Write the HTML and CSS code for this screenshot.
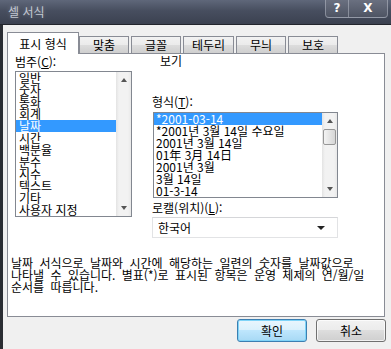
FILE: index.html
```html
<!DOCTYPE html>
<html lang="ko">
<head>
    <meta charset="UTF-8">
    <title>셀 서식</title>
    <link rel="stylesheet" href="styles.css">
</head>
<body>
    <div class="window">
        <div class="titlebar">
            <span class="title">셀 서식</span>
            <div class="caption">
                <span class="cap-btn help">?</span>
                <span class="cap-btn close">X</span>
            </div>
        </div>

        <div class="tabs">
            <span class="tab active">표시 형식</span>
            <span class="tab">맞춤</span>
            <span class="tab">글꼴</span>
            <span class="tab">테두리</span>
            <span class="tab">무늬</span>
            <span class="tab">보호</span>
        </div>

        <div class="panel">
            <div class="cols">
                <div class="col-left">
                    <div class="label">범주(<u>C</u>):</div>
                    <div class="listbox cat">
                        <ul class="items">
                            <li>일반</li>
                            <li>숫자</li>
                            <li>통화</li>
                            <li>회계</li>
                            <li class="selected">날짜</li>
                            <li>시간</li>
                            <li>백분율</li>
                            <li>분수</li>
                            <li>지수</li>
                            <li>텍스트</li>
                            <li>기타</li>
                            <li>사용자 지정</li>
                        </ul>
                        <div class="scrollbar">
                            <span class="arrow up"></span>
                            <span class="arrow down"></span>
                        </div>
                    </div>
                </div>

                <div class="col-right">
                    <div class="sample">보기</div>
                    <div class="label fmt-label">형식(<u>T</u>):</div>
                    <div class="listbox fmt">
                        <ul class="items">
                            <li class="selected">*2001-03-14</li>
                            <li>*2001년 3월 14일 수요일</li>
                            <li>2001년 3월 14일</li>
                            <li>01年 3月 14日</li>
                            <li>2001년 3월</li>
                            <li>3월 14일</li>
                            <li>01-3-14</li>
                        </ul>
                        <div class="scrollbar">
                            <span class="arrow up"></span>
                            <span class="thumb"></span>
                            <span class="arrow down"></span>
                        </div>
                    </div>
                    <div class="label locale-label">로캘(위치)(<u>L</u>):</div>
                    <div class="combo">
                        <span>한국어</span>
                        <span class="combo-arrow"></span>
                    </div>
                </div>
            </div>

            <p class="desc">날짜 서식으로 날짜와 시간에 해당하는 일련의 숫자를 날짜값으로<br>나타낼 수 있습니다. 별표(*)로 표시된 항목은 운영 체제의 연/월/일<br>순서를 따릅니다.</p>
        </div>

        <div class="buttons">
            <button class="btn default">확인</button>
            <button class="btn">취소</button>
        </div>
    </div>
</body>
</html>
```

FILE: styles.css
```css
* {
    box-sizing: border-box;
}

html, body {
    margin: 0;
    padding: 0;
}

body {
    width: 391px;
    height: 349px;
    overflow: hidden;
    background-color: #f0f0f0;
    font-family: "Noto Sans CJK KR", "Noto Sans", sans-serif;
    font-size: 12px;
    color: #000;
}

.window {
    height: 349px;
    border-left: 3px solid #2a2d33;
    background-color: #f0f0f0;
}

/* title bar */
.titlebar {
    display: flex;
    height: 25px;
    margin-left: -3px;
    background: linear-gradient(#5f677a, #474e5f 45%, #3b4150);
    border-bottom: 1px solid #22252c;
}

.title {
    padding: 5px 0 0 8px;
    line-height: 14px;
    color: #c3c8d2;
    text-shadow: 0 0 4px rgba(255, 255, 255, 0.25);
}

.caption {
    display: flex;
    margin-left: auto;
    margin-right: 3px;
    height: 18px;
    border: 1px solid rgba(200, 205, 215, 0.45);
    border-top: none;
    border-radius: 0 0 4px 4px;
    background: linear-gradient(#6a7080, #4e5463);
}

.cap-btn {
    height: 17px;
    line-height: 16px;
    text-align: center;
    color: #fff;
    font-family: "DejaVu Sans", sans-serif;
    font-weight: bold;
    font-size: 12px;
}

.help {
    width: 23px;
    border-right: 1px solid rgba(200, 205, 215, 0.45);
}

.close {
    width: 38px;
}

/* tabs */
.tabs {
    display: flex;
    align-items: flex-end;
    height: 28px;
    padding-left: 4px;
}

.tab {
    min-width: 50px;
    height: 17px;
    padding: 0 8px;
    margin-left: 2px;
    line-height: 16px;
    text-align: center;
    border: 1px solid #898c95;
    border-bottom: none;
    background: linear-gradient(#f2f2f2, #ebebeb 50%, #dddddd 50%, #cfcfcf);
}

.tab.active {
    width: 72px;
    height: 22px;
    margin-left: 0;
    margin-bottom: -1px;
    padding-top: 3px;
    background: #fff;
    position: relative;
}

.tab.active + .tab {
    margin-left: 0;
}

/* panel */
.panel {
    height: 264px;
    margin: 0 6px 0 4px;
    border: 1px solid #898c95;
    background-color: #fff;
}

.cols {
    display: grid;
    grid-template-columns: 117px 186px;
    column-gap: 20px;
    padding: 2px 0 0 7px;
}

.label {
    line-height: 12px;
    height: 12px;
}

.listbox {
    display: flex;
    border: 1px solid #828790;
    background-color: #fff;
}

.listbox.cat {
    margin-top: 3px;
    height: 146px;
}

.items {
    flex: 1;
    list-style: none;
    margin: 0;
    padding: 0;
}

.items li {
    height: 12px;
    line-height: 12px;
    padding-left: 3px;
    white-space: nowrap;
}

.items li.selected {
    background-color: #3399ff;
    color: #fff;
}

.scrollbar {
    display: flex;
    flex-direction: column;
    align-items: center;
    width: 15px;
    padding: 6px 0;
    background: linear-gradient(90deg, #e3e3e3, #f2f2f2 20%, #f2f2f2 80%, #e8e8e8);
}

.arrow {
    width: 0;
    height: 0;
    border-left: 3px solid transparent;
    border-right: 3px solid transparent;
}

.arrow.up {
    border-bottom: 4px solid #555;
}

.arrow.down {
    margin-top: auto;
    border-top: 4px solid #555;
}

.thumb {
    width: 13px;
    height: 16px;
    margin-top: 6px;
    border: 1px solid #979797;
    border-radius: 2px;
    background: linear-gradient(90deg, #f3f3f3, #e4e4e4 50%, #d6d6d6);
}

.col-right .sample {
    padding-left: 8px;
    margin-top: -1px;
    line-height: 12px;
}

.fmt-label {
    margin-top: 29px;
}

.listbox.fmt {
    margin-top: 4px;
    height: 86px;
    margin-left: 1px;
}

.listbox.fmt .items li {
    padding-left: 2px;
}

.locale-label {
    margin-top: 4px;
}

.combo {
    display: flex;
    align-items: center;
    height: 21px;
    margin-top: 3px;
    padding: 0 12px 0 5px;
    border: 1px solid #e2e3e5;
    border-top-color: #d5d6d9;
    background-color: #fff;
}

.combo-arrow {
    margin-left: auto;
    width: 0;
    height: 0;
    border-left: 4px solid transparent;
    border-right: 4px solid transparent;
    border-top: 4px solid #222;
}

.desc {
    margin: 19px 0 0 3px;
    line-height: 12px;
    word-spacing: 3px;
    white-space: nowrap;
}

/* bottom buttons */
.buttons {
    display: flex;
    justify-content: flex-end;
    gap: 9px;
    margin-top: 2px;
    padding-right: 5px;
}

.btn {
    width: 70px;
    height: 23px;
    padding: 0;
    font-family: "Noto Sans CJK KR", "Noto Sans", sans-serif;
    font-size: 12px;
    color: #000;
    border: 1px solid #707070;
    border-radius: 3px;
    background: linear-gradient(#f2f2f2, #ebebeb 50%, #dddddd 50%, #cfcfcf);
    box-shadow: inset 0 0 0 1px rgba(255, 255, 255, 0.7);
}

.btn.default {
    border-color: #3c7fb1;
    background: linear-gradient(#eaf6fd, #d9f0fc 50%, #bee6fd 50%, #a7d9f5);
    box-shadow: inset 0 0 0 1px #7fd4f8;
}
```
